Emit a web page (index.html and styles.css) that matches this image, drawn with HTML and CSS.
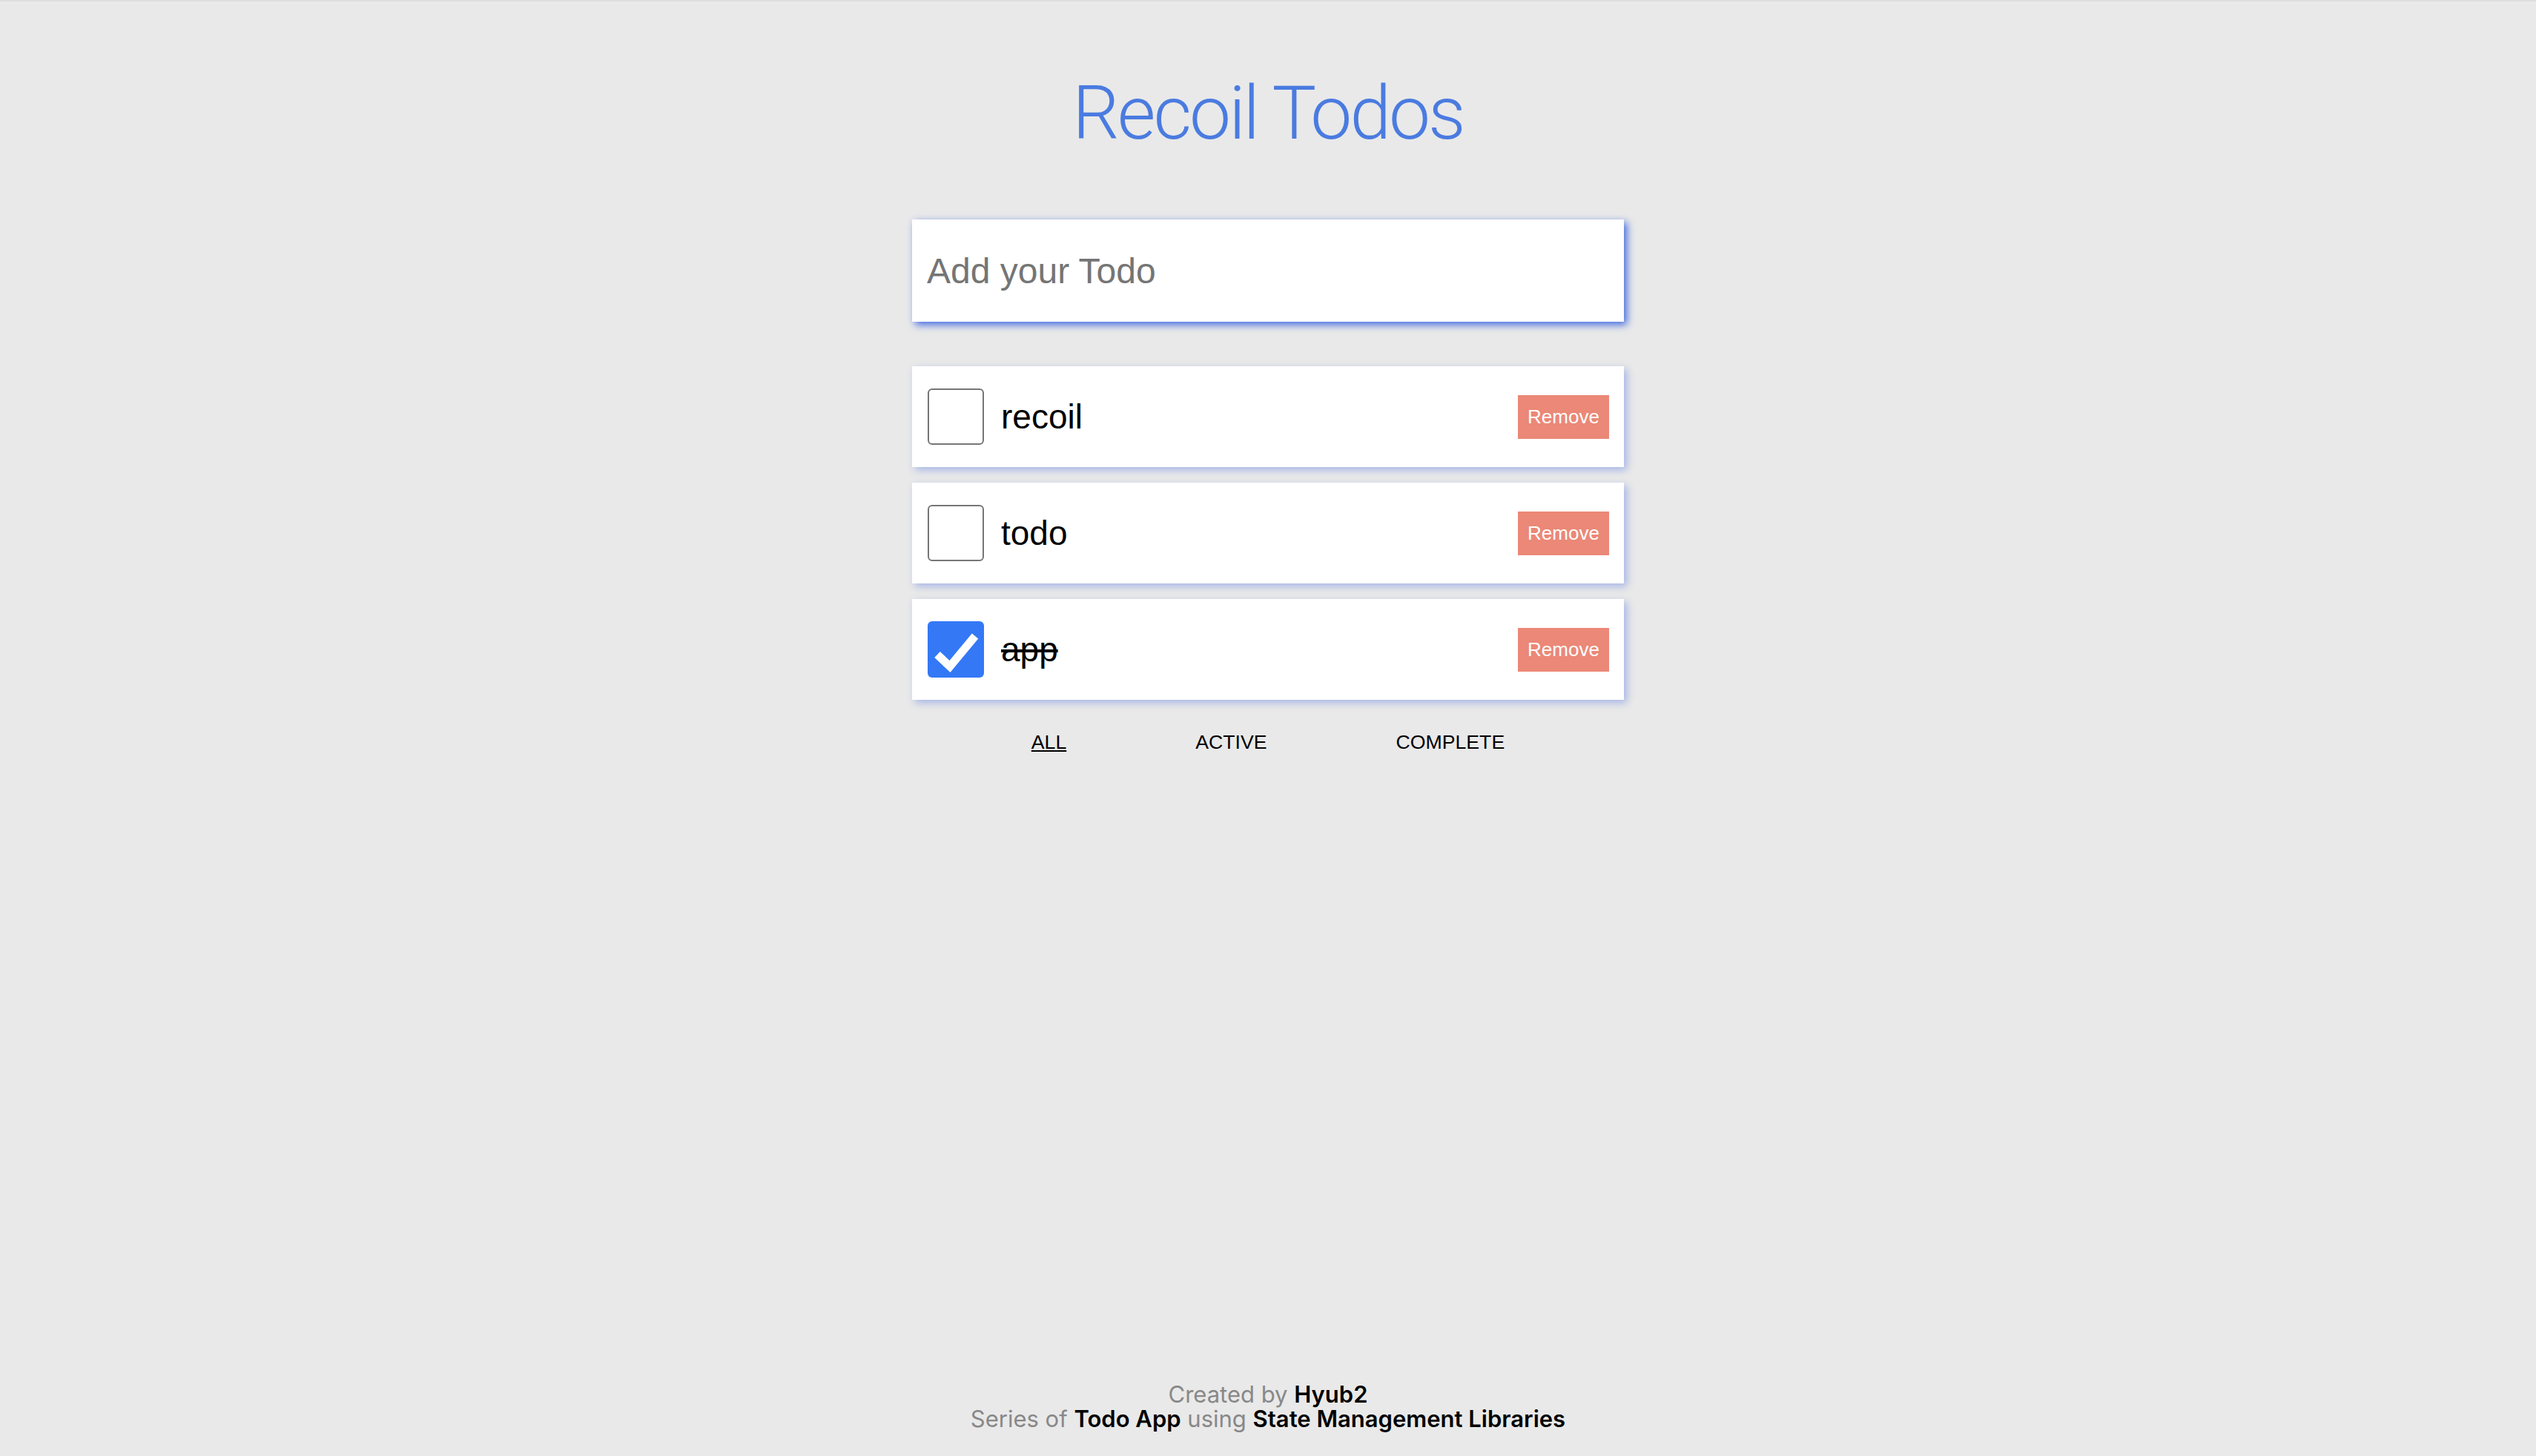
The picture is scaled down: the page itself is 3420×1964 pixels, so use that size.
FILE: index.html
```html
<!DOCTYPE html>
<html lang="en">
<head>
<meta charset="utf-8">
<title>Recoil Todos</title>
<link rel="stylesheet" href="styles.css">
</head>
<body>
<div class="app">
  <h1 class="title">Recoil Todos</h1>
  <input class="todo-input" type="text" placeholder="Add your Todo">
  <ul class="list">
    <li class="item">
      <span class="check"></span>
      <span class="label">recoil</span>
      <button class="remove">Remove</button>
    </li>
    <li class="item">
      <span class="check"></span>
      <span class="label">todo</span>
      <button class="remove">Remove</button>
    </li>
    <li class="item">
      <span class="check checked">
        <svg viewBox="0 0 76 76" width="76" height="76"><polyline points="13,45 30,61 64,20" fill="none" stroke="#fff" stroke-width="11" stroke-linecap="butt" stroke-linejoin="miter"/></svg>
      </span>
      <span class="label done">app</span>
      <button class="remove">Remove</button>
    </li>
  </ul>
  <div class="filters">
    <button class="filter selected">ALL</button>
    <button class="filter">ACTIVE</button>
    <button class="filter">COMPLETE</button>
  </div>
  <footer class="footer">
    <div>Created by <b>Hyub2</b></div>
    <div>Series of <b>Todo App</b> using <b>State Management Libraries</b></div>
  </footer>
</div>
</body>
</html>
```
FILE: styles.css
```css
html, body {
  margin: 0;
  padding: 0;
}
body {
  background: #e9e9e9;
  border-top: 2px solid #dedede;
  font-family: "Liberation Sans", Arial, sans-serif;
}
.app {
  display: flex;
  flex-direction: column;
  align-items: center;
  min-height: calc(100vh - 2px);
  box-sizing: border-box;
}
.title {
  margin: 0;
  padding-top: 101px;
  font-family: Roboto, Inter, sans-serif;
  font-weight: 300;
  font-size: 100px;
  line-height: 100px;
  letter-spacing: -3px;
  color: #4a7be0;
}
.todo-input {
  margin-top: 93px;
  width: 960px;
  height: 138px;
  box-sizing: border-box;
  border: none;
  outline: none;
  padding: 0 20px;
  font-family: "Liberation Sans", Arial, sans-serif;
  font-size: 48px;
  background: #fff;
  box-shadow: 4px 4px 10px #4169e1;
}
.todo-input::placeholder {
  color: #757575;
}
.list {
  list-style: none;
  margin: 60px 0 0;
  padding: 0;
  width: 960px;
  display: flex;
  flex-direction: column;
  gap: 21px;
}
.item {
  height: 136px;
  box-sizing: border-box;
  background: #fff;
  display: flex;
  align-items: center;
  padding: 0 20px 0 21px;
  box-shadow: 4px 4px 10px rgba(65, 105, 225, 0.4);
}
.check {
  width: 76px;
  height: 76px;
  box-sizing: border-box;
  border: 2px solid #767676;
  border-radius: 6px;
  flex: none;
  display: block;
}
.check.checked {
  border: none;
  background: #3478f6;
}
.check svg {
  display: block;
}
.label {
  flex: 1;
  margin-left: 23px;
  font-size: 46px;
  color: #000;
}
.label.done {
  text-decoration: line-through;
}
.remove {
  width: 123px;
  height: 59px;
  border: none;
  padding: 0;
  background: #eb8877;
  color: #fff;
  font-family: "Liberation Sans", Arial, sans-serif;
  font-size: 26px;
}
.filters {
  margin-top: 42px;
  display: flex;
  justify-content: center;
  gap: 174px;
}
.filter {
  border: none;
  background: none;
  padding: 0;
  font-family: "Liberation Sans", Arial, sans-serif;
  font-size: 26.67px;
  color: #000;
}
.filter.selected {
  text-decoration: underline;
}
.footer {
  margin-top: auto;
  padding-bottom: 34px;
  text-align: center;
  font-family: Inter, "Noto Sans", sans-serif;
  font-size: 31px;
  line-height: 33px;
  color: #888;
}
.footer b {
  color: #000;
  font-weight: 600;
}
```
